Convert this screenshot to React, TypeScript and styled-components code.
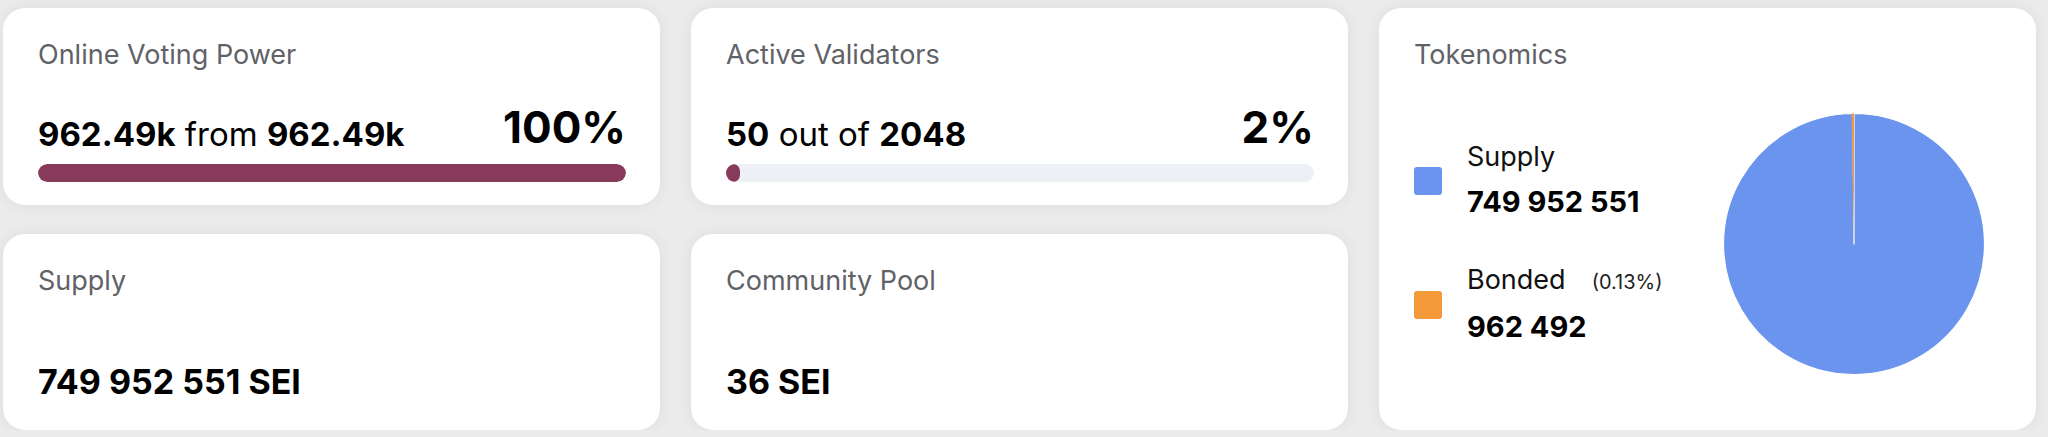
import React from "react"
import styled, { createGlobalStyle } from "styled-components"

type Slice = {
  label: string
  value: number
  color: string
}

const GlobalStyle = createGlobalStyle`
  body {
    margin: 0;
    background: #ebebeb;
    font-family: Inter, "Liberation Sans", sans-serif;
    color: #000;
  }
`

const SUPPLY = 749952551
const BONDED = 962492

const slices: Slice[] = [
  { label: "Supply", value: SUPPLY, color: "#6b94ef" },
  { label: "Bonded", value: BONDED, color: "#f59a3b" },
]

const spaced = (n: number) =>
  Math.round(n)
    .toString()
    .replace(/\B(?=(\d{3})+(?!\d))/g, " ")

const short = (n: number) => `${(n / 1000).toFixed(2)}k`

const ProgressCard = ({
  title,
  current,
  total,
  joiner,
  format,
}: {
  title: string
  current: number
  total: number
  joiner: string
  format: (n: number) => string
}) => {
  const ratio = Math.min(current / total, 1)
  return (
    <Card>
      <CardTitle>{title}</CardTitle>
      <ValueRow>
        <Amounts>
          <Strong>{format(current)}</Strong> {joiner} <Strong>{format(total)}</Strong>
        </Amounts>
        <Percent>{Math.round(ratio * 100)}%</Percent>
      </ValueRow>
      <Track>
        <Fill style={{ width: `${ratio * 100}%` }} />
      </Track>
    </Card>
  )
}

const ValueCard = ({ title, value }: { title: string; value: string }) => (
  <Card>
    <CardTitle>{title}</CardTitle>
    <BigValue>{value}</BigValue>
  </Card>
)

const PIE = 262
const R = 130.5
const C = PIE / 2

const point = (a: number) => `${C + R * Math.sin(a)} ${C - R * Math.cos(a)}`

const wedge = (from: number, to: number) =>
  `M ${C} ${C} L ${point(from)} A ${R} ${R} 0 ${to - from > Math.PI ? 1 : 0} 1 ${point(to)} Z`

const PieChart = ({ data }: { data: Slice[] }) => {
  const sum = data.reduce((acc, s) => acc + s.value, 0)
  let start = 0
  return (
    <svg width={PIE} height={PIE} viewBox={`0 0 ${PIE} ${PIE}`}>
      {data.map((s, i) => {
        const last = i === data.length - 1
        // tiny slices still get a sliver so they stay visible
        const sweep = Math.max((s.value / sum) * Math.PI * 2, 0.018)
        const from = last ? Math.PI * 2 - sweep : start
        const to = last ? Math.PI * 2 : start + sweep
        start = to
        return (
          <path
            key={s.label}
            d={wedge(from, to)}
            fill={s.color}
            stroke={last ? "none" : "#fff"}
            strokeWidth={1.2}
            strokeLinejoin="round"
          />
        )
      })}
    </svg>
  )
}

const Tokenomics = () => (
  <TokenCard>
    <CardTitle>Tokenomics</CardTitle>
    <TokenBody>
      <Legend>
        {slices.map((s, i) => (
          <LegendItem key={s.label}>
            <Swatch $color={s.color} />
            <div>
              <LegendLabel>
                {s.label}
                {i > 0 && <Share>({((s.value / SUPPLY) * 100).toFixed(2)}%)</Share>}
              </LegendLabel>
              <LegendValue>{spaced(s.value)}</LegendValue>
            </div>
          </LegendItem>
        ))}
      </Legend>
      <PieChart data={slices} />
    </TokenBody>
  </TokenCard>
)

export default function App() {
  return (
    <>
      <GlobalStyle />
      <Dashboard>
        <ProgressCard
          title="Online Voting Power"
          current={962492}
          total={962492}
          joiner="from"
          format={short}
        />
        <ProgressCard title="Active Validators" current={50} total={2048} joiner="out of" format={String} />
        <Tokenomics />
        <ValueCard title="Supply" value={`${spaced(SUPPLY)} SEI`} />
        <ValueCard title="Community Pool" value="36 SEI" />
      </Dashboard>
    </>
  )
}

const Dashboard = styled.div`
  display: grid;
  grid-template-columns: repeat(3, 657px);
  grid-template-rows: 197px 196px;
  column-gap: 31px;
  row-gap: 29px;
  padding: 8px 0 0 3px;
`

const Card = styled.div`
  display: flex;
  flex-direction: column;
  background: #fff;
  border-radius: 22px;
  box-shadow: 0 0 16px rgba(0, 0, 0, 0.06);
  padding: 31px 34px 23px 35px;
  box-sizing: border-box;
`

const TokenCard = styled(Card)`
  grid-column: 3;
  grid-row: 1 / span 2;
`

const CardTitle = styled.div`
  font-size: 27px;
  line-height: 32px;
  color: #5f6267;
`

const ValueRow = styled.div`
  display: flex;
  justify-content: space-between;
  align-items: flex-end;
  margin-top: auto;
`

const Amounts = styled.div`
  font-size: 33px;
  line-height: 40px;
`

const Strong = styled.b`
  font-weight: 700;
`

const Percent = styled.div`
  font-size: 44px;
  line-height: 50px;
  font-weight: 700;
  margin-bottom: 2px;
`

const Track = styled.div`
  height: 18px;
  border-radius: 9px;
  background: #edf1f5;
  margin-top: 10px;
  overflow: hidden;
`

const Fill = styled.div`
  height: 100%;
  border-radius: 9px;
  background: #883a5b;
`

const BigValue = styled.div`
  margin-top: auto;
  font-size: 34px;
  line-height: 40px;
  font-weight: 700;
  margin-bottom: 5px;
`

const TokenBody = styled.div`
  flex: 1;
  display: flex;
  align-items: center;
  justify-content: space-between;
  margin-top: 9px;
  padding-right: 17px;
`

const Legend = styled.div`
  display: flex;
  flex-direction: column;
  gap: 43px;
`

const LegendItem = styled.div`
  display: flex;
  align-items: center;
  gap: 25px;
`

const Swatch = styled.div<{ $color: string }>`
  width: 28px;
  height: 28px;
  border-radius: 3px;
  background: ${({ $color }) => $color};
`

const LegendLabel = styled.div`
  font-size: 27px;
  line-height: 32px;
  color: #111;
`

const Share = styled.span`
  font-size: 20px;
  margin-left: 26px;
  color: #222;
`

const LegendValue = styled.div`
  margin-top: 10px;
  font-size: 29px;
  line-height: 38px;
  font-weight: 700;
`
